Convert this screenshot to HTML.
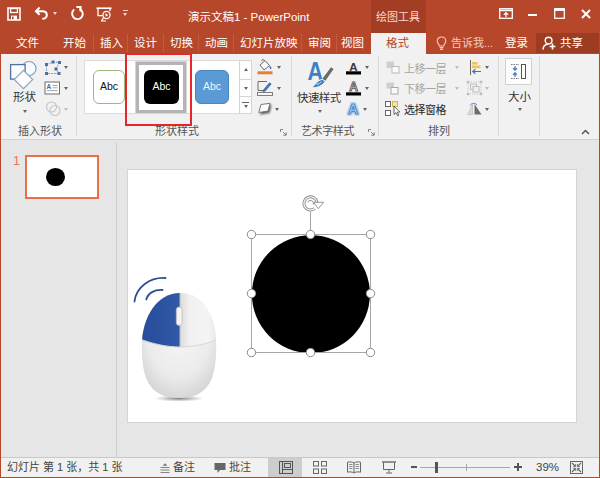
<!DOCTYPE html>
<html lang="zh-CN">
<head>
<meta charset="utf-8">
<title>演示文稿1 - PowerPoint</title>
<style>
*{box-sizing:border-box;margin:0;padding:0}
html,body{width:600px;height:478px;overflow:hidden;background:#e6e6e6}
body{font-family:"Liberation Sans","Noto Sans CJK SC",sans-serif;font-size:11px;color:#444;position:relative}
.abs,.t{position:absolute}
.t{white-space:nowrap;line-height:14px;height:14px}
#win{position:absolute;left:0;top:0;width:600px;height:478px;background:#e6e6e6;overflow:hidden}
#title{position:absolute;left:0;top:0;width:600px;height:54px;background:#b7472a}
#title .t{color:#fff}
.tab{font-size:11.5px}
#ribbon{position:absolute;left:1px;top:54px;width:598px;height:86px;background:#f1f1f1;border-bottom:1px solid #d2d2d2}
.sep{position:absolute;width:1px;background:#dadada}
.glabel{font-size:11px;color:#555}
.btxt{font-size:11px;color:#333}
.dis{color:#a6a6a6}
.arr{position:absolute;width:0;height:0;border-left:2.5px solid transparent;border-right:2.5px solid transparent;border-top:3px solid #666;margin-left:.5px}
.arr.up{border-top:none;border-bottom:3px solid #666}
.arr.dim{border-top-color:#bdbdbd}
#status{position:absolute;left:1px;top:457px;width:598px;height:20px;background:#f1f1f1;border-top:1px solid #c8c8c8}
#status .t{color:#444;font-size:11px}
</style>
</head>
<body>
<div id="win">

<!-- ===== title bar + tabs ===== -->
<div id="title">
  <div class="abs" style="left:371px;top:0;width:55px;height:33px;background:#a33d23"></div>
  <div class="t" style="left:188px;top:10px;font-size:11.5px">演示文稿1 - PowerPoint</div>
  <div class="t" style="left:376px;top:10px;font-size:11px;color:#f9d9cf">绘图工具</div>


  <!-- quick access toolbar -->
  <svg class="abs" style="left:7px;top:7px" width="14" height="14" viewBox="0 0 14 14">
    <path d="M1 1H13V13H1Z" fill="none" stroke="#fff" stroke-width="1.6"/>
    <rect x="3.6" y="1.5" width="6.8" height="4" fill="none" stroke="#fff" stroke-width="1.3"/>
    <rect x="4" y="8.6" width="6" height="4.4" fill="#fff"/>
    <rect x="5" y="9.6" width="1.6" height="2.6" fill="#b7472a"/>
  </svg>
  <svg class="abs" style="left:34px;top:6px" width="15" height="15" viewBox="0 0 15 15">
    <path d="M2.2 5.2 H8.6 C11.6 5.2 12.8 7.2 12.8 8.9 C12.8 11 11 12.8 8.2 12.8" fill="none" stroke="#fff" stroke-width="2.100"/>
    <path d="M5.6 1.6 L2 5.2 L5.6 8.8" fill="none" stroke="#fff" stroke-width="2.100"/>
  </svg>
  <div class="arr" style="left:52px;top:12px;border-top-color:#f3d5cc"></div>
  <svg class="abs" style="left:70px;top:6px" width="15" height="15" viewBox="0 0 15 15">
    <path d="M9.4 2.9 A5.3 5.3 0 1 1 4.2 3.6" fill="none" stroke="#fff" stroke-width="1.9"/>
    <path d="M6.4 1 H10.6 V5.4" fill="none" stroke="#fff" stroke-width="1.9"/>
  </svg>
  <svg class="abs" style="left:96px;top:7px" width="16" height="15" viewBox="0 0 16 15">
    <path d="M.5 1.2H15.5" stroke="#fff" stroke-width="1.6"/>
    <path d="M2 1.5V8.6H7" fill="none" stroke="#fff" stroke-width="1.3"/>
    <path d="M14 1.5V4" fill="none" stroke="#fff" stroke-width="1.3"/>
    <circle cx="10.5" cy="8" r="3.6" fill="none" stroke="#fff" stroke-width="1.2"/>
    <path d="M9.5 6.2V9.8L12.3 8Z" fill="#fff"/>
    <path d="M7.6 10.4L5.6 14M5 14H10" stroke="#fff" stroke-width="1.2" fill="none"/>
  </svg>
  <div class="abs" style="left:123px;top:10px;width:5px;height:1px;background:#f3d5cc"></div>
  <div class="arr" style="left:122.500px;top:12.500px;border-top-color:#f3d5cc"></div>

  <!-- window controls -->
  <svg class="abs" style="left:499px;top:8px" width="14" height="11" viewBox="0 0 14 11">
    <rect x=".7" y=".7" width="12.6" height="9.6" fill="none" stroke="#fff" stroke-width="1.3"/>
    <path d="M.7 2.4H13.3" stroke="#fff" stroke-width="1.6"/>
    <path d="M7 9V4.8M4.8 6.8L7 4.6L9.2 6.8" fill="none" stroke="#fff" stroke-width="1.2"/>
  </svg>
  <div class="abs" style="left:528px;top:14px;width:9px;height:2px;background:#fff"></div>
  <svg class="abs" style="left:554px;top:8px" width="11" height="11" viewBox="0 0 11 11">
    <rect x=".7" y=".7" width="9.6" height="9.6" fill="none" stroke="#fff" stroke-width="1.3"/>
    <path d="M.7 1.8H10.3" stroke="#fff" stroke-width="2.2"/>
  </svg>
  <svg class="abs" style="left:581px;top:9px" width="10" height="10" viewBox="0 0 10 10">
    <path d="M1 1L9 9M9 1L1 9" stroke="#fff" stroke-width="2"/>
  </svg>
  <div class="abs" style="left:93px;top:34px;width:1px;height:18px;background:#c25a3b"></div>
  <div class="abs" style="left:127px;top:34px;width:1px;height:18px;background:#c25a3b"></div>
  <div class="abs" style="left:163px;top:34px;width:1px;height:18px;background:#c25a3b"></div>
  <div class="abs" style="left:198px;top:34px;width:1px;height:18px;background:#c25a3b"></div>
  <div class="abs" style="left:233px;top:34px;width:1px;height:18px;background:#c25a3b"></div>
  <div class="abs" style="left:301px;top:34px;width:1px;height:18px;background:#c25a3b"></div>
  <div class="abs" style="left:336px;top:34px;width:1px;height:18px;background:#c25a3b"></div>
  <div class="t tab" style="left:16px;top:36px">文件</div>
  <div class="t tab" style="left:63px;top:36px">开始</div>
  <div class="t tab" style="left:100px;top:36px">插入</div>
  <div class="t tab" style="left:134px;top:36px">设计</div>
  <div class="t tab" style="left:170px;top:36px">切换</div>
  <div class="t tab" style="left:205px;top:36px">动画</div>
  <div class="t tab" style="left:240px;top:36px">幻灯片放映</div>
  <div class="t tab" style="left:308px;top:36px">审阅</div>
  <div class="t tab" style="left:341px;top:36px">视图</div>
  <div class="abs" style="left:371px;top:33px;width:55px;height:21px;background:#f1f1f1"></div>
  <div class="t tab" style="left:386px;top:36px;color:#b7472a">格式</div>
  <svg class="abs" style="left:436px;top:36px" width="11" height="15" viewBox="0 0 11 15">
    <path d="M5.5 1 C2.8 1 1.2 3 1.2 5 C1.2 7 3 8 3.4 10 H7.6 C8 8 9.8 7 9.8 5 C9.8 3 8.2 1 5.5 1Z" fill="none" stroke="#f3cfc4" stroke-width="1.1"/>
    <path d="M3.6 11.6H7.4M4 13.4H7" stroke="#f3cfc4" stroke-width="1.1"/>
  </svg>
  <div class="t tab" style="left:451px;top:36px;color:#f3c9bd;font-size:11px">告诉我...</div>
  <div class="t tab" style="left:505px;top:36px">登录</div>
  <div class="abs" style="left:536px;top:33px;width:63px;height:20px;background:#9c3d22"></div>
  <svg class="abs" style="left:542px;top:36px" width="15" height="15" viewBox="0 0 15 15">
    <circle cx="6.6" cy="4.6" r="3.4" fill="none" stroke="#fff" stroke-width="1.4"/>
    <path d="M1 13.6 C1.2 10 3.5 8.2 6 8.2" fill="none" stroke="#fff" stroke-width="1.4"/>
    <path d="M10.5 7.6V13.4M7.6 10.5H13.4" stroke="#fff" stroke-width="1.6"/>
  </svg>
  <div class="t tab" style="left:560px;top:36px">共享</div>
</div>

<!-- ===== ribbon ===== -->
<div id="ribbon">
  <!-- coordinates inside ribbon: x = page x - 1, y = page y - 54 -->
  <!-- group 1: insert shapes -->
  <svg class="abs" style="left:8px;top:6px" width="30" height="30" viewBox="0 0 30 30">
    <circle cx="20" cy="8.5" r="7" fill="#f8fafd" stroke="#7f9cc4" stroke-width="1.2"/>
    <rect x="1.6" y="4.6" width="14.5" height="14.5" fill="#fdfdfd" stroke="#54709b" stroke-width="1.3"/>
    <rect x="-6.5" y="-6.5" width="13" height="13" transform="translate(14.5 19.5) rotate(45)" fill="#fdfdfd" stroke="#8ea6c6" stroke-width="1.2"/>
  </svg>
  <div class="t btxt" style="left:12px;top:36px;font-size:11.5px">形状</div>
  <div class="arr" style="left:21px;top:56px"></div>

  <svg class="abs" style="left:43px;top:6px" width="18" height="16" viewBox="0 0 18 16">
    <path d="M2.5 4.5 L9 2 L15.5 2.5 L12 9 L15 13.5 L2.5 13.5 Z" fill="none" stroke="#7d97bd" stroke-width="1" stroke-dasharray="2 1.2"/>
    <g fill="#4a6ea6"><rect x="1" y="3" width="3" height="3"/><rect x="7.5" y=".5" width="3" height="3"/><rect x="14" y="1" width="3" height="3"/><rect x="10.5" y="7.5" width="3" height="3"/><rect x="13.5" y="12" width="3" height="3"/><rect x="1" y="12" width="3" height="3"/></g>
  </svg>
  <div class="arr" style="left:62px;top:12px"></div>
  <svg class="abs" style="left:43px;top:27px" width="17" height="14" viewBox="0 0 17 14">
    <rect x="1" y="1" width="14.5" height="12" fill="#fff" stroke="#6f6f6f" stroke-width="1"/>
    <text x="2.6" y="7.5" font-family="Liberation Sans, sans-serif" font-size="6.5" font-weight="bold" fill="#3e66a8">A</text>
    <path d="M8.5 4.5h5M8.5 6.8h5M3 9.6h10.5" stroke="#9a9a9a" stroke-width=".9"/>
  </svg>
  <div class="arr" style="left:62px;top:33px"></div>
  <svg class="abs" style="left:44px;top:47px" width="17" height="16" viewBox="0 0 17 16">
    <circle cx="6.5" cy="6" r="5" fill="none" stroke="#c4c4c4" stroke-width="1.1"/>
    <circle cx="10" cy="9.5" r="5" fill="none" stroke="#c4c4c4" stroke-width="1.1"/>
  </svg>
  <div class="arr dim" style="left:62px;top:54px"></div>
  <div class="t glabel" style="left:17px;top:70px">插入形状</div>
  <div class="sep" style="left:75px;top:2px;height:80px"></div>

  <!-- group 2: shape styles -->
  <div class="abs" style="left:83px;top:6px;width:168px;height:54px;background:#fff;border:1px solid #dcdcdc"></div>
  <div class="abs" style="left:92px;top:16px;width:32px;height:34px;border-radius:6px;background:#fff;border:1px solid #9ab97a"></div>
  <div class="t" style="left:92px;top:24.500px;width:32px;text-align:center;font-size:10.5px;color:#111">Abc</div>
  <div class="abs" style="left:134px;top:7px;width:52px;height:53px;background:#fff;border:1px solid #d6d6d6"></div><div class="abs" style="left:135px;top:8px;width:50px;height:51px;background:#fff;border:3px solid #b4b4b4"></div>
  <div class="abs" style="left:143px;top:16px;width:35px;height:34px;border-radius:6px;background:#000"></div>
  <div class="t" style="left:143px;top:24.500px;width:35px;text-align:center;font-size:10.5px;color:#fff">Abc</div>
  <div class="abs" style="left:194px;top:16px;width:34px;height:34px;border-radius:6px;background:#5b9bd5;border:1px solid #4a86c0"></div>
  <div class="t" style="left:194px;top:24.500px;width:34px;text-align:center;font-size:10.5px;color:#eef5fc">Abc</div>
  <div class="abs" style="left:238px;top:6px;width:13px;height:54px;background:#fdfdfd;border:1px solid #d4d4d4"></div>
  <div class="abs" style="left:238px;top:25px;width:13px;height:1px;background:#d4d4d4"></div>
  <div class="abs" style="left:238px;top:42px;width:13px;height:1px;background:#d4d4d4"></div>
  <div class="arr up" style="left:242px;top:14px"></div>
  <div class="arr" style="left:242px;top:33px"></div>
  <div class="abs" style="left:241px;top:48px;width:7px;height:1px;background:#666"></div>
  <div class="arr" style="left:242px;top:51px"></div>
  <!-- red annotation rectangle -->
  <div class="abs" style="left:124px;top:-1px;width:67px;height:73px;border:2px solid #e8262a"></div>

  <!-- fill / outline / effects -->
  <svg class="abs" style="left:255px;top:5px" width="18" height="16" viewBox="0 0 18 16">
    <path d="M4 6 L9 1.5 L13.5 6.5 L8 11 Z" fill="#fafafa" stroke="#6b6b6b" stroke-width="1"/>
    <path d="M6 2.2 C5 .2 8.2 -.2 8.6 2.2" fill="none" stroke="#6b6b6b" stroke-width="1"/>
    <path d="M13.5 6.5 C15.5 7.5 16 9.5 14.8 10.5 C13.6 9.7 13.3 8 13.5 6.5Z" fill="#4573b5"/>
    <rect x="1.5" y="12.3" width="15" height="3" fill="#ed7d31"/>
  </svg>
  <div class="arr" style="left:275px;top:12px"></div>
  <svg class="abs" style="left:255px;top:26px" width="18" height="16" viewBox="0 0 18 16">
    <path d="M2 1.5 H11 M2 1.5 V10.5 H8" fill="none" stroke="#6b6b6b" stroke-width="1"/>
    <path d="M7 10 L13.5 2.2 L15.6 4 L9.2 11.5 L6.6 12.2 Z" fill="#4573b5"/>
    <rect x="1.5" y="12.6" width="15" height="2.8" fill="#fdfdfd" stroke="#6b6b6b" stroke-width=".9"/>
  </svg>
  <div class="arr" style="left:275px;top:33px"></div>
  <svg class="abs" style="left:255px;top:48px" width="18" height="15" viewBox="0 0 18 15">
    <defs><filter id="bl" x="-30%" y="-30%" width="160%" height="160%"><feGaussianBlur stdDeviation=".9"/></filter></defs>
    <path d="M6 4 L15.500 2.500 L13.500 11 L4 12.500 Z" fill="#555" filter="url(#bl)"/>
    <path d="M5 2.500 L14 1.300 L12 9 L2.800 10.500 Z" fill="#fbfbfb" stroke="#7a7a7a" stroke-width="1"/>
  </svg>
  <div class="arr" style="left:273px;top:54px"></div>
  <div class="t glabel" style="left:154px;top:70px">形状样式</div>
  <svg class="abs" style="left:279px;top:75px" width="7" height="7" viewBox="0 0 7 7"><path d="M.5 3V.5H3M3 3l3 3M6.2 3.2v3h-3" fill="none" stroke="#777" stroke-width=".9"/></svg>
  <div class="sep" style="left:290px;top:2px;height:80px"></div>

  <!-- group 3: WordArt styles -->
  <svg class="abs" style="left:304px;top:5px" width="32" height="30" viewBox="0 0 32 30">
    <text transform="translate(2.500 21) scale(.86 1)" font-family="Liberation Sans, sans-serif" font-size="25" font-weight="bold" fill="#3f7fc4">A</text>
    <path d="M26 8.200 L28.600 10 L20.200 22 L17 20.200 Z" fill="#6a6a6a"/>
    <path d="M17 20.200 L20.200 22 C18.500 26.500 11.500 29.500 6 28.500 C10.500 27 11.500 21.500 17 20.200Z" fill="#3f7fc4" stroke="#f1f1f1" stroke-width="1"/>
    <path d="M12 25.500 C14 25 15.500 23.800 16.500 22.500" fill="none" stroke="#dbe8f6" stroke-width="1"/>
  </svg>
  <div class="t btxt" style="left:296px;top:37px;font-size:11.5px;letter-spacing:-.6px">快速样式</div>
  <div class="arr" style="left:316px;top:56px"></div>
  <svg class="abs" style="left:344px;top:7px" width="17" height="14" viewBox="0 0 17 14">
    <text x="8.5" y="9.5" text-anchor="middle" font-family="Liberation Sans, sans-serif" font-size="11.5" font-weight="bold" fill="#3a3a3a">A</text>
    <rect x="1" y="10.3" width="15" height="3.2" fill="#000"/>
  </svg>
  <div class="arr" style="left:363px;top:12px"></div>
  <svg class="abs" style="left:344px;top:27px" width="17" height="15" viewBox="0 0 17 15">
    <text x="8.5" y="10" text-anchor="middle" font-family="Liberation Sans, sans-serif" font-size="12" font-weight="bold" fill="#fff" stroke="#555" stroke-width=".9">A</text>
    <rect x="1" y="11.3" width="15" height="3.2" fill="#000"/>
  </svg>
  <div class="arr" style="left:363px;top:33px"></div>
  <svg class="abs" style="left:343px;top:46px" width="18" height="17" viewBox="0 0 18 17">
    <text x="9" y="14" text-anchor="middle" font-family="Liberation Sans, sans-serif" font-size="14" font-weight="bold" fill="#fff" stroke="#bcd6f0" stroke-width="4" stroke-linejoin="round">A</text>
    <text x="9" y="14" text-anchor="middle" font-family="Liberation Sans, sans-serif" font-size="14" font-weight="bold" fill="#fff" stroke="#4c8cd0" stroke-width="1.2">A</text>
  </svg>
  <div class="arr" style="left:361px;top:54px"></div>
  <div class="t glabel" style="left:300px;top:70px;letter-spacing:-.4px">艺术字样式</div>
  <svg class="abs" style="left:367px;top:75px" width="7" height="7" viewBox="0 0 7 7"><path d="M.5 3V.5H3M3 3l3 3M6.2 3.2v3h-3" fill="none" stroke="#777" stroke-width=".9"/></svg>
  <div class="sep" style="left:377px;top:2px;height:80px"></div>

  <!-- group 4: arrange -->
  <svg class="abs" style="left:384px;top:6px" width="16" height="15" viewBox="0 0 16 15">
    <rect x="1.500" y="1.500" width="7.500" height="6.500" fill="#cfcfcf"/>
    <rect x="7" y="6.500" width="7" height="6.500" fill="#fbfbfb" stroke="#b9b9b9" stroke-width="1"/>
  </svg>
  <div class="t btxt dis" style="left:403px;top:8px;letter-spacing:-.5px">上移一层</div>
  <div class="arr dim" style="left:453px;top:12px"></div>
  <svg class="abs" style="left:384px;top:27px" width="16" height="15" viewBox="0 0 16 15">
    <rect x="1.500" y="1.500" width="7.500" height="6" fill="#cfcfcf"/>
    <rect x="6" y="6.500" width="7" height="6.500" fill="#fbfbfb" stroke="#a9a9a9" stroke-width="1"/>
  </svg>
  <div class="t btxt dis" style="left:403px;top:28px;letter-spacing:-.5px">下移一层</div>
  <div class="arr dim" style="left:453px;top:33px"></div>
  <svg class="abs" style="left:383px;top:46px" width="17" height="17" viewBox="0 0 17 17">
    <rect x="1.5" y="1.5" width="5" height="5" fill="#fff" stroke="#666" stroke-width="1"/>
    <rect x="1.5" y="10.5" width="5" height="5" fill="#fff" stroke="#666" stroke-width="1"/>
    <rect x="8.5" y="1.5" width="5" height="5" fill="#f6e6a6" stroke="#d8b64a" stroke-width="1"/>
    <path d="M10 6 L10 14.5 L12 12.6 L13.6 15.8 L14.8 15.2 L13.3 12.2 L15.8 12 Z" fill="#fff" stroke="#444" stroke-width=".8"/>
  </svg>
  <div class="t btxt" style="left:403px;top:49px;letter-spacing:-.5px;color:#262626">选择窗格</div>

  <svg class="abs" style="left:468px;top:5px" width="14" height="17" viewBox="0 0 14 17">
    <path d="M1.500 1V16" stroke="#666" stroke-width="1"/>
    <rect x="3" y="3" width="5.500" height="2.600" fill="#f2c35a"/>
    <rect x="3" y="6.600" width="8.500" height="2.600" fill="#f2c35a"/>
    <path d="M12 12.500H4M6.300 10.200l-2.500 2.300 2.500 2.300" fill="none" stroke="#3f73b8" stroke-width="1.200"/>
  </svg>
  <div class="arr" style="left:483px;top:12px"></div>
  <svg class="abs" style="left:465px;top:26px" width="17" height="16" viewBox="0 0 17 16">
    <rect x="2" y="2" width="13" height="12" fill="none" stroke="#c6c6c6" stroke-width=".9" stroke-dasharray="1.5 1"/>
    <rect x="4.5" y="4" width="6" height="5.5" fill="none" stroke="#bdbdbd" stroke-width="1"/>
    <rect x="7" y="6.5" width="6" height="5.5" fill="#f1f1f1" stroke="#bdbdbd" stroke-width="1"/>
    <g fill="#bdbdbd"><rect x=".8" y=".8" width="2.4" height="2.4"/><rect x="13.8" y=".8" width="2.4" height="2.4"/><rect x=".8" y="12.8" width="2.4" height="2.4"/><rect x="13.8" y="12.8" width="2.4" height="2.4"/></g>
  </svg>
  <div class="arr dim" style="left:483px;top:33px"></div>
  <svg class="abs" style="left:466px;top:48px" width="16" height="14" viewBox="0 0 16 14">
    <path d="M5.5 2.5 L5.5 12.5 L.8 12.5 Z" fill="#dcdcdc" stroke="#bfbfbf" stroke-width=".8"/>
    <path d="M7.5 2 L7.5 12.5 L14.5 12.5 Z" fill="#6d6d6d"/>
    <path d="M3 3.5 C4.5 .8 8.5 .8 10 3" fill="none" stroke="#4a7dc0" stroke-width="1"/>
  </svg>
  <div class="arr" style="left:483px;top:54px"></div>
  <div class="t glabel" style="left:427px;top:70px">排列</div>
  <div class="sep" style="left:497px;top:2px;height:80px"></div>

  <!-- group 5: size -->
  <div class="abs" style="left:504px;top:4px;width:27px;height:27px;background:#fcfcfc;border:1px solid #d0d0d0"></div>
  <svg class="abs" style="left:509px;top:9px" width="18" height="18" viewBox="0 0 18 18">
    <rect x="11.5" y="1.5" width="4" height="14" fill="#fff" stroke="#555" stroke-width="1"/>
    <path d="M1 1.5H9M1 15.5H9" stroke="#777" stroke-width="1" stroke-dasharray="1.5 1"/>
    <path d="M5 3V7M3 5.2l2 2 2-2M5 14V10M3 11.8l2-2 2 2" fill="none" stroke="#3f73b8" stroke-width="1.2"/>
  </svg>
  <div class="t btxt" style="left:507px;top:36px;font-size:11.5px">大小</div>
  <div class="arr" style="left:516px;top:54px"></div>
  <div class="sep" style="left:538px;top:2px;height:80px"></div>
  <svg class="abs" style="left:580px;top:75px" width="9" height="6" viewBox="0 0 9 6"><path d="M1 5l3.5-3.5L8 5" fill="none" stroke="#555" stroke-width="1.5"/></svg>
</div>

<!-- ===== left thumbnail panel ===== -->
<div class="abs" style="left:1px;top:140px;width:115px;height:317px;background:#e6e6e6"></div>
<div class="abs" style="left:116px;top:142px;width:1px;height:315px;background:#cfcfcf"></div>
<div class="t" style="left:13px;top:154px;color:#e07a58;font-size:12.5px">1</div>
<div class="abs" style="left:25px;top:155px;width:74px;height:44px;border:2px solid #ea6f48;background:#fff">
  <div class="abs" style="left:19.300px;top:10.800px;width:18.600px;height:17.800px;border-radius:50%;background:#000"></div>
</div>

<!-- ===== slide ===== -->
<div class="abs" id="slide" style="left:127px;top:169px;width:450px;height:254px;background:#fff;border:1px solid #d4d4d4"></div>
<svg class="abs" style="left:0;top:140px" width="600" height="316" viewBox="0 140 600 316">
  <defs>
    <radialGradient id="mb" cx="50%" cy="38%" r="65%">
      <stop offset="0" stop-color="#f6f6f6"/><stop offset=".65" stop-color="#ebebeb"/><stop offset="1" stop-color="#d4d4d4"/>
    </radialGradient>
    <linearGradient id="mr" x1="0" y1="0" x2="1" y2="0">
      <stop offset="0" stop-color="#dcdcdc"/><stop offset=".25" stop-color="#f1f1f1"/><stop offset=".7" stop-color="#f4f4f4"/><stop offset="1" stop-color="#e2e2e2"/>
    </linearGradient>
    <radialGradient id="sh" cx="50%" cy="50%" r="50%">
      <stop offset="0" stop-color="#555" stop-opacity=".75"/><stop offset="1" stop-color="#777" stop-opacity="0"/>
    </radialGradient>
    <clipPath id="mclip"><path d="M180 293 C203 293 216.200 316 216.200 346 C216.200 375 211 398 179 398 C147 398 141.800 375 141.800 346 C141.800 316 158 293 180 293Z"/></clipPath>
    <linearGradient id="ml" x1="0" y1="0" x2="1" y2="0"><stop offset="0" stop-color="#284c98"/><stop offset="1" stop-color="#3059a8"/></linearGradient>
  </defs>
  <!-- mouse -->
  <ellipse cx="179" cy="398.500" rx="25" ry="3.200" fill="url(#sh)"/>
  <path d="M180 293 C203 293 216.200 316 216.200 346 C216.200 375 211 398 179 398 C147 398 141.800 375 141.800 346 C141.800 316 158 293 180 293Z" fill="url(#mb)"/>
  <g clip-path="url(#mclip)">
    <path d="M180.200 290 H220 V339 C207 344 194 347 180.200 347Z" fill="url(#mr)"/>
    <path d="M140 290 H180.200 V347 C167 347 153 344 140 339Z" fill="url(#ml)"/>
    <path d="M140 339 C153 344 167 347 180.200 347 C194 347 207 344 218 339" fill="none" stroke="#d6d6d6" stroke-width="1"/>
    <path d="M180.200 293V347" stroke="#cfcfcf" stroke-width="1.200"/>
  </g>
  <rect x="176.300" y="307" width="5.800" height="18.500" rx="2.900" fill="#f4f4f4" stroke="#bdbdbd" stroke-width=".8"/>
  <path d="M134.500 301.500 C136 287 150 277 165.500 278" fill="none" stroke="#2d4f91" stroke-width="1.800" stroke-linecap="round"/>
  <path d="M146.300 299.500 C148 293 154.500 289.500 162.500 290" fill="none" stroke="#2d4f91" stroke-width="1.800" stroke-linecap="round"/>
  <!-- black circle + selection -->
  <circle cx="310.900" cy="294.200" r="59" fill="#000"/>
  <rect x="251.500" y="234.500" width="119" height="118" fill="none" stroke="#a6a6a6" stroke-width="1"/>
  <path d="M310.500 212V235" stroke="#a6a6a6" stroke-width="1"/>
  <g fill="#fff" stroke="#8c8c8c" stroke-width="1">
    <circle cx="251.500" cy="234.500" r="4.200"/><circle cx="310.500" cy="234.500" r="4.200"/><circle cx="370.500" cy="234.500" r="4.200"/>
    <circle cx="251.500" cy="293.500" r="4.200"/><circle cx="370.500" cy="293.500" r="4.200"/>
    <circle cx="251.500" cy="352.500" r="4.200"/><circle cx="310.500" cy="352.500" r="4.200"/><circle cx="370.500" cy="352.500" r="4.200"/>
  </g>
  <!-- rotate handle -->
  <g fill="none" stroke="#8c8c8c">
    <path d="M314.74 208.46 A6.6 6.6 0 1 1 317.00 202.25" stroke-width="3"/>
    <path d="M314.74 208.46 A6.6 6.6 0 1 1 317.00 202.25" stroke="#fff" stroke-width="1.2"/>
    <path d="M307.68 202.37 A3.0 3.0 0 0 1 313.32 204.43" stroke-width="1"/>
  </g>
  <path d="M313.6 202.4 L323.6 202.2 L318.4 208.6Z" fill="#fff" stroke="#8c8c8c" stroke-width=".9" stroke-linejoin="round"/>
</svg>

<!-- ===== status bar ===== -->
<div id="status">
  <!-- coords: x = page-1, y = page-456 -->
  <div class="t" style="left:6px;top:2px">幻灯片 第 1 张，共 1 张</div>
  <svg class="abs" style="left:158px;top:4px" width="12" height="12" viewBox="0 0 12 12">
    <path d="M6 1.200L8.400 3.800H3.600Z" fill="#777"/><path d="M1.500 5.500H10.500M1.500 8H10.500M1.500 10.500H10.500" stroke="#777" stroke-width=".9"/>
  </svg>
  <div class="t" style="left:172px;top:2px">备注</div>
  <svg class="abs" style="left:213px;top:4px" width="12" height="12" viewBox="0 0 12 12">
    <path d="M.5 1H11.500V8H6L3.500 11V8H.5Z" fill="#666"/>
  </svg>
  <div class="t" style="left:228px;top:2px">批注</div>
  <div class="abs" style="left:267px;top:0;width:34px;height:19px;background:#cdcdcd"></div>
  <svg class="abs" style="left:278px;top:3px" width="14" height="13" viewBox="0 0 14 13">
    <rect x=".5" y=".5" width="13" height="12" fill="none" stroke="#555" stroke-width="1"/>
    <path d="M3.500 .5V12.500M3.500 8.500H13.500" stroke="#555" stroke-width="1"/>
    <rect x="5.500" y="2.500" width="6" height="4" fill="none" stroke="#555" stroke-width="1"/>
  </svg>
  <svg class="abs" style="left:312px;top:3px" width="14" height="13" viewBox="0 0 14 13">
    <g fill="none" stroke="#666" stroke-width="1"><rect x=".5" y=".5" width="5" height="4.500"/><rect x="8.500" y=".5" width="5" height="4.500"/><rect x=".5" y="8" width="5" height="4.500"/><rect x="8.500" y="8" width="5" height="4.500"/></g>
  </svg>
  <svg class="abs" style="left:346px;top:3px" width="14" height="13" viewBox="0 0 14 13">
    <path d="M7 2C5.500 .8 2.500 .6 .5 1.200V11.200C2.500 10.600 5.500 10.800 7 12C8.500 10.800 11.500 10.600 13.500 11.200V1.200C11.500 .6 8.500 .8 7 2ZM7 2V12" fill="none" stroke="#666" stroke-width="1"/>
    <path d="M2 3.500H5.500M2 5.500H5.500M2 7.500H5.500M8.500 3.500H12M8.500 5.500H12M8.500 7.500H12" stroke="#777" stroke-width=".8"/>
  </svg>
  <svg class="abs" style="left:381px;top:3px" width="14" height="13" viewBox="0 0 14 13">
    <path d="M0 1H14" stroke="#666" stroke-width="1.400"/>
    <path d="M1.500 1.500V8.500H12.500V1.500" fill="none" stroke="#666" stroke-width="1"/>
    <path d="M7 8.500V11.500M4 12H10" stroke="#666" stroke-width="1"/>
  </svg>
  <div class="abs" style="left:410px;top:8px;width:6px;height:2px;background:#555"></div>
  <div class="abs" style="left:419px;top:9px;width:90px;height:1px;background:#a8a8a8"></div>
  <div class="abs" style="left:465px;top:6px;width:1px;height:7px;background:#a8a8a8"></div>
  <div class="abs" style="left:434px;top:4px;width:3px;height:11px;background:#555"></div>
  <div class="abs" style="left:513px;top:8px;width:8px;height:2px;background:#555"></div>
  <div class="abs" style="left:516px;top:5px;width:2px;height:8px;background:#555"></div>
  <div class="t" style="left:535px;top:2px;font-size:11.500px">39%</div>
  <svg class="abs" style="left:569px;top:3px" width="13" height="13" viewBox="0 0 13 13">
    <rect x=".5" y=".5" width="12" height="12" fill="none" stroke="#666" stroke-width="1"/>
    <path d="M2 2L5 5M11 2L8 5M2 11L5 8M11 11L8 8" stroke="#666" stroke-width="1.100"/>
    <path d="M5.600 3.200V5.600H3.200M7.400 3.200V5.600H9.800M5.600 9.800V7.400H3.200M7.400 9.800V7.400H9.800" fill="none" stroke="#666" stroke-width=".9"/>
  </svg>
</div>

<!-- window border -->
<div class="abs" style="left:0;top:54px;width:1px;height:424px;background:#b7472a"></div>
<div class="abs" style="left:599px;top:54px;width:1px;height:424px;background:#b7472a"></div>
<div class="abs" style="left:0;top:477px;width:600px;height:1px;background:#b7472a"></div>
</div>
</body>
</html>
